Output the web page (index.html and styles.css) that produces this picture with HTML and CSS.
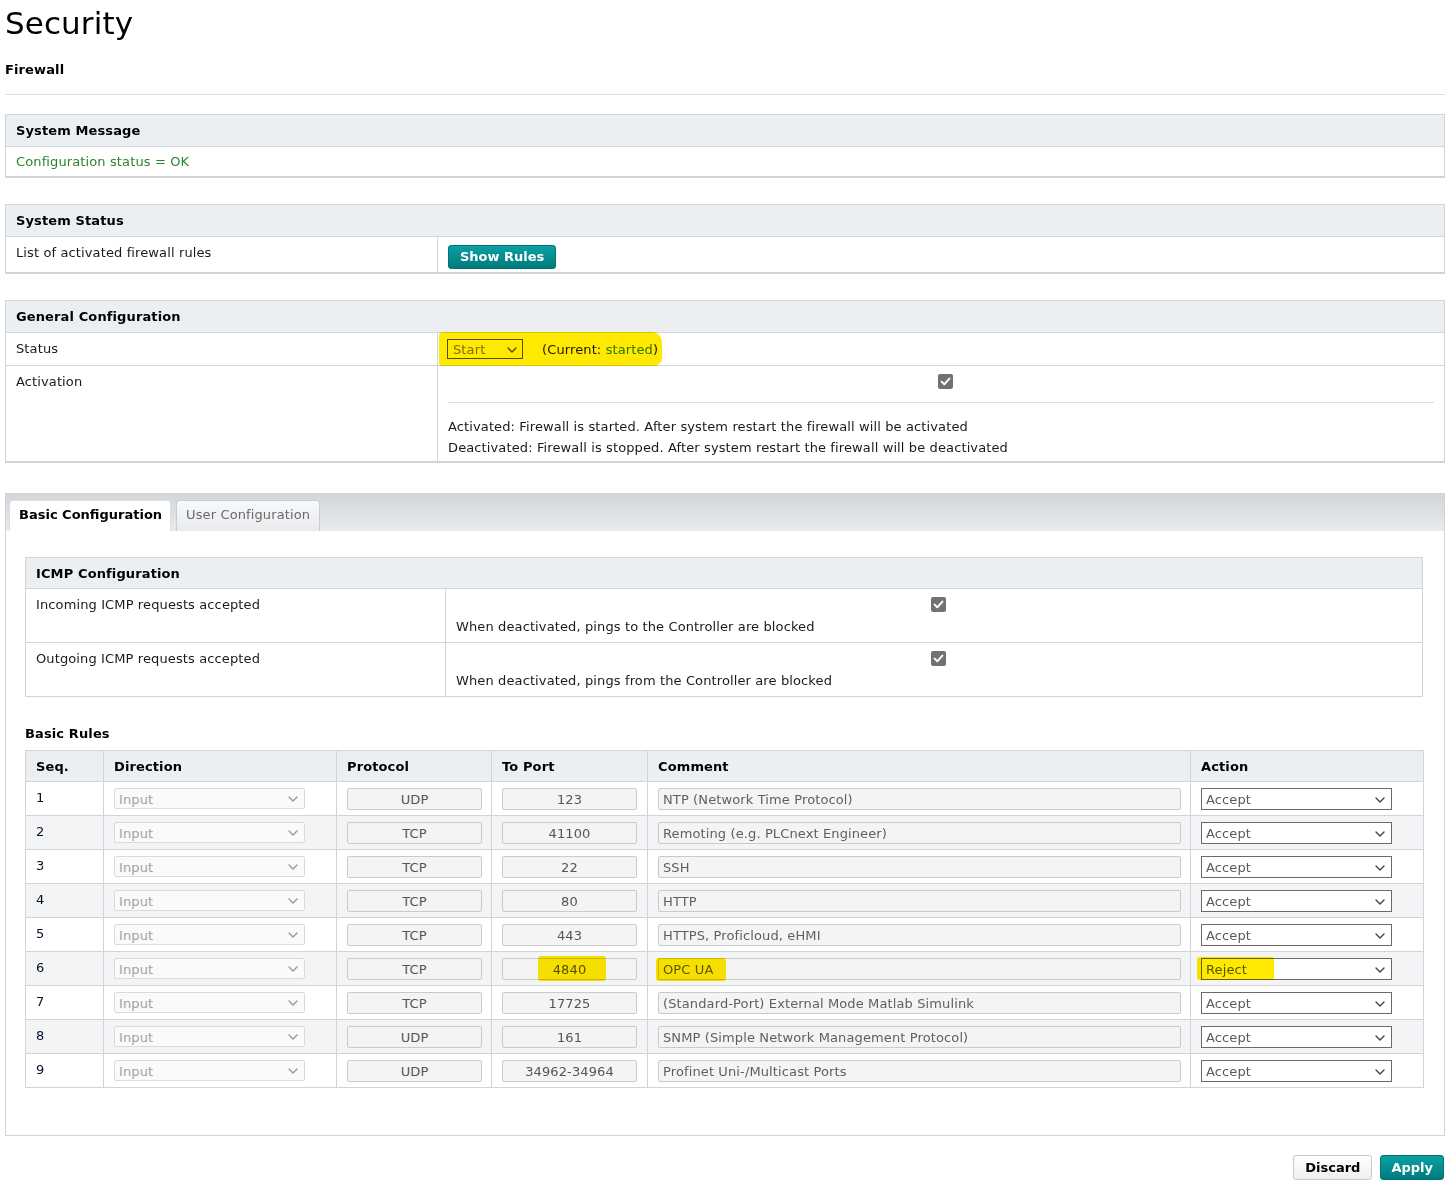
FILE: index.html
```html
<!DOCTYPE html>
<html lang="en">
<head>
<meta charset="utf-8">
<title>Security - Firewall</title>
<link rel="stylesheet" href="styles.css">
</head>
<body>
<div class="page">
  <h1 class="title">Security</h1>
  <h2 class="subtitle">Firewall</h2>
  <hr class="sep">

  <table class="box">
    <thead><tr><th>System Message</th></tr></thead>
    <tbody><tr><td class="ok">Configuration status = OK</td></tr></tbody>
  </table>

  <table class="box">
    <colgroup><col class="c-label"><col></colgroup>
    <thead><tr><th colspan="2">System Status</th></tr></thead>
    <tbody>
      <tr>
        <td>List of activated firewall rules</td>
        <td class="btn-cell"><button class="btn btn-teal btn-show">Show Rules</button></td>
      </tr>
    </tbody>
  </table>

  <table class="box box-last">
    <colgroup><col class="c-label"><col></colgroup>
    <thead><tr><th colspan="2">General Configuration</th></tr></thead>
    <tbody>
      <tr>
        <td>Status</td>
        <td class="status-cell">
          <span class="status-wrap hl hl-status">
            <span class="ctl sel sel-status">Start<svg class="chev" viewBox="0 0 10 6" width="10" height="6"><polyline points="1,1 5,5 9,1"/></svg></span>
            <span class="current">(Current: <span class="green">started</span>)</span>
          </span>
        </td>
      </tr>
      <tr>
        <td>Activation</td>
        <td class="act-cell">
          <div class="cb-row"><svg class="cb" viewBox="0 0 15 15" width="15" height="15"><rect width="15" height="15" rx="2"/><path d="M3.6 7.6 L6.3 10.3 L11.4 4.6"/></svg></div>
          <hr class="inner-sep">
          <div class="act-text">
            <div>Activated: Firewall is started. After system restart the firewall will be activated</div>
            <div>Deactivated: Firewall is stopped. After system restart the firewall will be deactivated</div>
          </div>
        </td>
      </tr>
    </tbody>
  </table>

  <div class="tabbox">
    <div class="tabbar">
      <div class="tab tab-active">Basic Configuration</div>
      <div class="tab">User Configuration</div>
    </div>
    <div class="tabbody">
      <table class="grid">
        <colgroup><col class="c-icmp"><col></colgroup>
        <thead><tr><th colspan="2">ICMP Configuration</th></tr></thead>
        <tbody>
          <tr>
            <td>Incoming ICMP requests accepted</td>
            <td class="icmp-cell">
              <div class="cb-row"><svg class="cb" viewBox="0 0 15 15" width="15" height="15"><rect width="15" height="15" rx="2"/><path d="M3.6 7.6 L6.3 10.3 L11.4 4.6"/></svg></div>
              <div class="icmp-text">When deactivated, pings to the Controller are blocked</div>
            </td>
          </tr>
          <tr>
            <td>Outgoing ICMP requests accepted</td>
            <td class="icmp-cell">
              <div class="cb-row"><svg class="cb" viewBox="0 0 15 15" width="15" height="15"><rect width="15" height="15" rx="2"/><path d="M3.6 7.6 L6.3 10.3 L11.4 4.6"/></svg></div>
              <div class="icmp-text">When deactivated, pings from the Controller are blocked</div>
            </td>
          </tr>
        </tbody>
      </table>

      <h3 class="rules-title">Basic Rules</h3>
      <table class="grid rules">
        <colgroup>
          <col class="c-seq"><col class="c-dir"><col class="c-proto"><col class="c-port"><col class="c-comment"><col class="c-action">
        </colgroup>
        <thead>
          <tr><th>Seq.</th><th>Direction</th><th>Protocol</th><th>To Port</th><th>Comment</th><th>Action</th></tr>
        </thead>
        <tbody>
          <tr>
            <td class="seq">1</td>
            <td><span class="ctl sel sel-dir">Input<svg class="chev" viewBox="0 0 10 6" width="10" height="6"><polyline points="1,1 5,5 9,1"/></svg></span></td>
            <td><span class="ctl inp inp-c">UDP</span></td>
            <td><span class="ctl inp inp-c">123</span></td>
            <td><span class="ctl inp inp-comment">NTP (Network Time Protocol)</span></td>
            <td><span class="ctl sel sel-act">Accept<svg class="chev" viewBox="0 0 10 6" width="10" height="6"><polyline points="1,1 5,5 9,1"/></svg></span></td>
          </tr>
          <tr>
            <td class="seq">2</td>
            <td><span class="ctl sel sel-dir">Input<svg class="chev" viewBox="0 0 10 6" width="10" height="6"><polyline points="1,1 5,5 9,1"/></svg></span></td>
            <td><span class="ctl inp inp-c">TCP</span></td>
            <td><span class="ctl inp inp-c">41100</span></td>
            <td><span class="ctl inp inp-comment">Remoting (e.g. PLCnext Engineer)</span></td>
            <td><span class="ctl sel sel-act">Accept<svg class="chev" viewBox="0 0 10 6" width="10" height="6"><polyline points="1,1 5,5 9,1"/></svg></span></td>
          </tr>
          <tr>
            <td class="seq">3</td>
            <td><span class="ctl sel sel-dir">Input<svg class="chev" viewBox="0 0 10 6" width="10" height="6"><polyline points="1,1 5,5 9,1"/></svg></span></td>
            <td><span class="ctl inp inp-c">TCP</span></td>
            <td><span class="ctl inp inp-c">22</span></td>
            <td><span class="ctl inp inp-comment">SSH</span></td>
            <td><span class="ctl sel sel-act">Accept<svg class="chev" viewBox="0 0 10 6" width="10" height="6"><polyline points="1,1 5,5 9,1"/></svg></span></td>
          </tr>
          <tr>
            <td class="seq">4</td>
            <td><span class="ctl sel sel-dir">Input<svg class="chev" viewBox="0 0 10 6" width="10" height="6"><polyline points="1,1 5,5 9,1"/></svg></span></td>
            <td><span class="ctl inp inp-c">TCP</span></td>
            <td><span class="ctl inp inp-c">80</span></td>
            <td><span class="ctl inp inp-comment">HTTP</span></td>
            <td><span class="ctl sel sel-act">Accept<svg class="chev" viewBox="0 0 10 6" width="10" height="6"><polyline points="1,1 5,5 9,1"/></svg></span></td>
          </tr>
          <tr>
            <td class="seq">5</td>
            <td><span class="ctl sel sel-dir">Input<svg class="chev" viewBox="0 0 10 6" width="10" height="6"><polyline points="1,1 5,5 9,1"/></svg></span></td>
            <td><span class="ctl inp inp-c">TCP</span></td>
            <td><span class="ctl inp inp-c">443</span></td>
            <td><span class="ctl inp inp-comment">HTTPS, Proficloud, eHMI</span></td>
            <td><span class="ctl sel sel-act">Accept<svg class="chev" viewBox="0 0 10 6" width="10" height="6"><polyline points="1,1 5,5 9,1"/></svg></span></td>
          </tr>
          <tr>
            <td class="seq">6</td>
            <td><span class="ctl sel sel-dir">Input<svg class="chev" viewBox="0 0 10 6" width="10" height="6"><polyline points="1,1 5,5 9,1"/></svg></span></td>
            <td><span class="ctl inp inp-c">TCP</span></td>
            <td><span class="ctl inp inp-c"><span class="hl hl-port">4840</span></span></td>
            <td><span class="ctl inp inp-comment"><span class="hl hl-opc">OPC UA</span></span></td>
            <td><span class="ctl sel sel-act"><span class="hl hl-reject">Reject</span><svg class="chev" viewBox="0 0 10 6" width="10" height="6"><polyline points="1,1 5,5 9,1"/></svg></span></td>
          </tr>
          <tr>
            <td class="seq">7</td>
            <td><span class="ctl sel sel-dir">Input<svg class="chev" viewBox="0 0 10 6" width="10" height="6"><polyline points="1,1 5,5 9,1"/></svg></span></td>
            <td><span class="ctl inp inp-c">TCP</span></td>
            <td><span class="ctl inp inp-c">17725</span></td>
            <td><span class="ctl inp inp-comment">(Standard-Port) External Mode Matlab Simulink</span></td>
            <td><span class="ctl sel sel-act">Accept<svg class="chev" viewBox="0 0 10 6" width="10" height="6"><polyline points="1,1 5,5 9,1"/></svg></span></td>
          </tr>
          <tr>
            <td class="seq">8</td>
            <td><span class="ctl sel sel-dir">Input<svg class="chev" viewBox="0 0 10 6" width="10" height="6"><polyline points="1,1 5,5 9,1"/></svg></span></td>
            <td><span class="ctl inp inp-c">UDP</span></td>
            <td><span class="ctl inp inp-c">161</span></td>
            <td><span class="ctl inp inp-comment">SNMP (Simple Network Management Protocol)</span></td>
            <td><span class="ctl sel sel-act">Accept<svg class="chev" viewBox="0 0 10 6" width="10" height="6"><polyline points="1,1 5,5 9,1"/></svg></span></td>
          </tr>
          <tr>
            <td class="seq">9</td>
            <td><span class="ctl sel sel-dir">Input<svg class="chev" viewBox="0 0 10 6" width="10" height="6"><polyline points="1,1 5,5 9,1"/></svg></span></td>
            <td><span class="ctl inp inp-c">UDP</span></td>
            <td><span class="ctl inp inp-c">34962-34964</span></td>
            <td><span class="ctl inp inp-comment">Profinet Uni-/Multicast Ports</span></td>
            <td><span class="ctl sel sel-act">Accept<svg class="chev" viewBox="0 0 10 6" width="10" height="6"><polyline points="1,1 5,5 9,1"/></svg></span></td>
          </tr>
        </tbody>
      </table>
    </div>
  </div>

  <div class="actions">
    <button class="btn btn-light">Discard</button>
    <button class="btn btn-teal">Apply</button>
  </div>
</div>
</body>
</html>
```

FILE: styles.css
```css
* { box-sizing: border-box; }

html, body {
  margin: 0;
  background: #fff;
}

body {
  font-family: "DejaVu Sans", Verdana, sans-serif;
  font-size: 13px;
  line-height: 15px;
  letter-spacing: 0.12px;
  color: #1a1a1a;
}

.page {
  padding: 0 7px 0 5px;
}

.title {
  font-size: 31px;
  line-height: 38px;
  font-weight: normal;
  letter-spacing: 0.1px;
  margin: 4px 0 0;
  color: #000;
}

.subtitle {
  font-size: 13px;
  line-height: 15px;
  font-weight: bold;
  margin: 20px 0 0;
  color: #000;
}

.sep {
  border: 0;
  border-top: 1px solid #dcdde3;
  height: 0;
  margin: 17px 0 19px;
}

/* boxed section tables */
.box, .grid {
  width: 100%;
  border-collapse: collapse;
  table-layout: fixed;
}

.box {
  border: 1px solid #d2d5d8;
  border-bottom: 2px solid #d2d5d8;
  margin-bottom: 26px;
}

.box-last { margin-bottom: 30px; }

.box th, .grid th {
  background: #eceff2;
  text-align: left;
  font-weight: bold;
  color: #000;
  padding: 8px 10px;
  border: 1px solid #d2d5d8;
}

.grid th { padding: 8px 10px 7px; }

.box td, .grid td {
  padding: 8px 10px;
  vertical-align: top;
  border: 1px solid #d2d5d8;
}

.box td.ok {
  padding: 7px 10px;
  color: #2b842b;
}

.c-label { width: 432px; }

.btn-cell { padding: 8px 10px 3px !important; }

.status-cell { padding: 6px 10px 6px 9px !important; }

.act-cell { padding: 8px 10px 3px !important; }

.cb-row {
  height: 15px;
  text-align: center;
  line-height: 0;
}

.act-cell .cb-row { padding-left: 8px; }

.cb rect { fill: #727272; }
.cb path { fill: none; stroke: #fff; stroke-width: 2; stroke-linecap: round; stroke-linejoin: round; }

.inner-sep {
  border: 0;
  border-top: 1px solid #dcdcdc;
  height: 0;
  margin: 13px 0 0;
}

.act-text {
  margin-top: 13px;
  line-height: 21px;
}

.green { color: #2b842b; }

/* buttons */
.btn {
  font-family: "DejaVu Sans", Verdana, sans-serif;
  font-size: 13px;
  font-weight: bold;
  letter-spacing: 0;
  height: 24px;
  line-height: 20px;
  border-radius: 3px;
  cursor: pointer;
  margin: 0;
}

.btn-teal {
  color: #fff;
  background: linear-gradient(#0aa0a2, #007b7d);
  border: 1px solid #00727a;
  padding: 0 10px;
}

.btn-show { padding: 0 11px; }

.btn-light {
  color: #000;
  background: linear-gradient(#ffffff, #edeff1);
  border: 1px solid #c6c9cc;
  padding: 0 11px;
}

/* form-like controls */
.ctl {
  display: inline-flex;
  align-items: center;
  height: 22px;
  padding: 0 4px;
  font-size: 13px;
  line-height: 15px;
  white-space: nowrap;
  vertical-align: top;
  position: relative;
}

.sel { justify-content: space-between; }

.chev {
  fill: none;
  stroke-width: 1.4;
  stroke-linecap: round;
  stroke-linejoin: round;
  flex: none;
}

.sel-status {
  width: 76px;
  height: 20px;
  border: 1px solid #555;
  color: #7a7a7a;
  padding: 1px 5px 0 5px;
}
.sel-status .chev { stroke: #555; }

.status-wrap {
  display: inline-flex;
  align-items: center;
  gap: 19px;
}

.current { color: #1a1a1a; }

.sel-dir {
  width: 191px;
  height: 21px;
  border: 1px solid #dadada;
  border-radius: 2px;
  background: #fafafa;
  color: #a3a3a3;
  padding: 1px 6px 0 4px;
}
.sel-dir .chev { stroke: #9a9a9a; }

.sel-act {
  width: 191px;
  height: 22px;
  border: 1px solid #6a6a6a;
  background: #fff;
  color: #5a5a5a;
  padding: 1px 6px 0 4px;
}
.sel-act .chev { stroke: #444; }

.inp {
  border: 1px solid #cacaca;
  border-radius: 2px;
  background: #f4f4f4;
  color: #555;
  padding-top: 1px;
}

.inp-c {
  width: 135px;
  justify-content: center;
}

.inp-comment {
  width: 523px;
  color: #5f5f5f;
}

/* tab box */
.tabbox {
  border: 1px solid #d2d5d8;
}

.tabbar {
  display: flex;
  align-items: flex-end;
  height: 37px;
  padding: 0 0 0 3px;
  background: linear-gradient(#d2d6da, #e9ebed);
}

.tab {
  height: 31px;
  padding: 6px 9px 0;
  margin-right: 5px;
  border: 1px solid #c9ccd0;
  border-bottom: 0;
  border-radius: 4px 4px 0 0;
  background: linear-gradient(#f7f8f9, #e9ebee);
  color: #6a6a6a;
}

.tab-active {
  background: #fff;
  color: #000;
  font-weight: bold;
  letter-spacing: 0;
  border-color: #dcdfe2;
  padding: 6px 8px 0 9px;
}

.tabbody {
  padding: 26px 21px 47px 19px;
}

.c-icmp { width: 420px; }

.icmp-cell .cb-row {
  text-align: left;
  padding-left: 475px;
}

.icmp-text { margin-top: 7px; }

.rules-title {
  font-size: 13px;
  line-height: 15px;
  font-weight: bold;
  color: #000;
  margin: 29px 0 9px;
}

.c-seq { width: 78px; }
.c-dir { width: 233px; }
.c-proto { width: 155px; }
.c-port { width: 156px; }
.c-comment { width: 543px; }
.c-action { width: 233px; }

.rules td {
  padding: 6px 10px 5px;
  height: 34px;
}

.rules td.seq {
  padding: 8px 10px 5px;
  color: #0b0b2a;
}

.rules tbody tr:nth-child(even) td {
  background: #f3f4f5;
}

/* highlighter marks */
.hl {
  position: relative;
}

.hl::after {
  content: "";
  position: absolute;
  background: #ffe900;
  mix-blend-mode: multiply;
  pointer-events: none;
}

.hl-status::after {
  left: -8px;
  right: -4px;
  top: -7px;
  bottom: -7px;
  border-radius: 4px 10px 8px 3px;
}

.hl-port::after {
  left: -15px;
  right: -20px;
  top: -6px;
  bottom: -4px;
  border-radius: 3px;
}

.hl-opc::after {
  left: -7px;
  right: -13px;
  top: -4px;
  bottom: -4px;
  border-radius: 3px;
}

.hl-reject::after {
  left: -9px;
  right: -27px;
  top: -5px;
  bottom: -3px;
  border-radius: 3px;
}

.actions {
  display: flex;
  justify-content: flex-end;
  gap: 8px;
  margin-top: 19px;
  padding-right: 1px;
}

.actions .btn { height: 25px; }
```
